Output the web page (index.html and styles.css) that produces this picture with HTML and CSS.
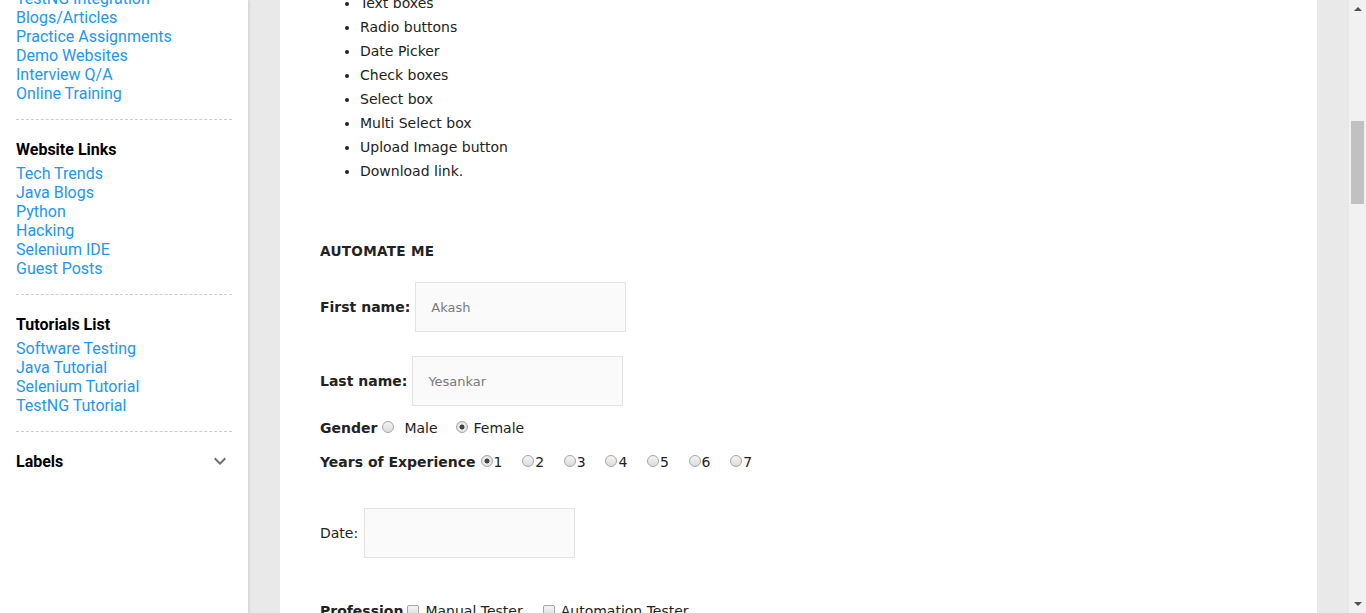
FILE: index.html
```html
<!DOCTYPE html>
<html lang="en">
<head>
<meta charset="utf-8">
<title>Automate Me</title>
<link rel="stylesheet" href="styles.css">
</head>
<body>
<div class="page">
  <aside class="sidebar">
    <div class="sidebar-inner">
      <ul class="links">
        <li><a href="#">TestNG Integration</a></li>
        <li><a href="#">Blogs/Articles</a></li>
        <li><a href="#">Practice Assignments</a></li>
        <li><a href="#">Demo Websites</a></li>
        <li><a href="#">Interview Q/A</a></li>
        <li><a href="#">Online Training</a></li>
      </ul>
      <div class="divider"></div>
      <h3 class="side-title">Website Links</h3>
      <ul class="links">
        <li><a href="#">Tech Trends</a></li>
        <li><a href="#">Java Blogs</a></li>
        <li><a href="#">Python</a></li>
        <li><a href="#">Hacking</a></li>
        <li><a href="#">Selenium IDE</a></li>
        <li><a href="#">Guest Posts</a></li>
      </ul>
      <div class="divider"></div>
      <h3 class="side-title">Tutorials List</h3>
      <ul class="links">
        <li><a href="#">Software Testing</a></li>
        <li><a href="#">Java Tutorial</a></li>
        <li><a href="#">Selenium Tutorial</a></li>
        <li><a href="#">TestNG Tutorial</a></li>
      </ul>
      <div class="divider"></div>
      <div class="labels-row">
        <h3 class="side-title flat">Labels</h3>
        <svg class="chev" width="24" height="24" viewBox="0 0 24 24"><path d="M16.59 8.59L12 13.17 7.41 8.59 6 10l6 6 6-6z" fill="#707070"/></svg>
      </div>
    </div>
  </aside>

  <main class="main">
    <div class="content">
      <div class="content-inner">
        <ul class="features">
          <li>Text boxes</li>
          <li>Radio buttons</li>
          <li>Date Picker</li>
          <li>Check boxes</li>
          <li>Select box</li>
          <li>Multi Select box</li>
          <li>Upload Image button</li>
          <li>Download link.</li>
        </ul>

        <h4 class="form-title">AUTOMATE ME</h4>

        <div class="field-row first">
          <label class="bold">First name:</label>
          <input class="text-in" type="text" placeholder="Akash">
        </div>
        <div class="field-row second">
          <label class="bold">Last name:</label>
          <input class="text-in" type="text" placeholder="Yesankar">
        </div>

        <div class="choice-row gender">
          <span class="bold">Gender</span>
          <input class="radio r-male" type="radio" name="g">
          <span class="opt-text male">Male</span>
          <input class="radio r-female" type="radio" name="g" checked>
          <span class="opt-text female">Female</span>
        </div>

        <div class="choice-row years">
          <span class="bold">Years of Experience</span>
          <span class="yopt"><input class="radio" type="radio" name="y" checked><span>1</span></span>
          <span class="yopt"><input class="radio" type="radio" name="y"><span>2</span></span>
          <span class="yopt"><input class="radio" type="radio" name="y"><span>3</span></span>
          <span class="yopt"><input class="radio" type="radio" name="y"><span>4</span></span>
          <span class="yopt"><input class="radio" type="radio" name="y"><span>5</span></span>
          <span class="yopt"><input class="radio" type="radio" name="y"><span>6</span></span>
          <span class="yopt"><input class="radio" type="radio" name="y"><span>7</span></span>
        </div>

        <div class="field-row date">
          <label>Date:</label>
          <input class="text-in" type="text">
        </div>

        <div class="choice-row profession">
          <span class="bold">Profession</span>
          <input class="check" type="checkbox">
          <span class="opt-text">Manual Tester</span>
          <input class="check c2" type="checkbox">
          <span class="opt-text">Automation Tester</span>
        </div>
      </div>
    </div>
  </main>

  <div class="scrollbar">
    <div class="arrow up"></div>
    <div class="track"><div class="thumb"></div></div>
    <div class="arrow down"></div>
  </div>
</div>
</body>
</html>
```

FILE: styles.css
```css
* { box-sizing: border-box; }
html, body {
  margin: 0;
  padding: 0;
  height: 100%;
  overflow: hidden;
}
body {
  background: #e9e9e9;
  font-family: "DejaVu Sans", Verdana, sans-serif;
}
.page {
  display: flex;
  align-items: stretch;
  height: 613px;
  overflow: hidden;
}

/* Sidebar */
.sidebar {
  width: 248px;
  flex: 0 0 248px;
  background: #fff;
  box-shadow: 1px 0 3px rgba(0,0,0,0.12);
  font-family: Roboto, "Liberation Sans", sans-serif;
  font-size: 16px;
  line-height: 19px;
  padding: 0 16px;
  position: relative;
  z-index: 1;
}
.sidebar-inner {
  margin-top: -11px;
}
.links {
  list-style: none;
  margin: 0;
  padding: 0;
}
.links a {
  color: #2196f3;
  text-decoration: none;
}
.divider {
  border-top: 1px dashed #cccccc;
  margin-top: 16px;
}
.side-title {
  margin: 20px 0 5px;
  font-size: 16px;
  font-weight: 700;
  line-height: 19px;
  color: #000;
}
.labels-row {
  display: flex;
  align-items: center;
  justify-content: space-between;
  margin-top: 17px;
}
.side-title.flat {
  margin: 0;
}
.chev { display: block; }

/* Main */
.main {
  flex: 1;
  display: flex;
  padding: 0 32px;
}
.content {
  flex: 1;
  background: #fff;
  padding: 0 40px;
  color: #222;
  font-size: 14px;
  overflow: hidden;
}
.content-inner {
  margin-top: -9px;
}
.features {
  margin: 0;
  padding-left: 40px;
  line-height: 24px;
}
.form-title {
  margin: 58px 0 0;
  font-size: 13.6px;
  line-height: 20px;
  font-weight: 700;
  letter-spacing: 0.3px;
}
.bold { font-weight: 700; }

.field-row {
  display: flex;
  align-items: center;
  gap: 5px;
  height: 50px;
}
.field-row.first { margin-top: 21px; }
.field-row.second { margin-top: 24px; }
.field-row.date { margin-top: 34px; gap: 6px; }
.text-in {
  width: 211px;
  height: 50px;
  border: 1px solid #e3e3e3;
  background: #fafafa;
  padding: 0 15px;
  font-family: "DejaVu Sans", Verdana, sans-serif;
  font-size: 13px;
  color: #333;
  outline: none;
}
.text-in::placeholder { color: #7a7a7a; }

.choice-row {
  display: flex;
  align-items: center;
  height: 24px;
}
.choice-row.gender { margin-top: 10px; }
.choice-row.years { margin-top: 10px; }
.choice-row.profession { margin-top: 41px; }

.radio {
  -webkit-appearance: none;
  appearance: none;
  width: 12px;
  height: 12px;
  margin: 0 0 0 5px;
  border: 1px solid #a6a6a6;
  border-radius: 50%;
  background: linear-gradient(#f4f4f4, #dcdcdc);
  position: relative;
  top: -1px;
  flex: 0 0 12px;
}
.radio:checked {
  background: radial-gradient(circle, #444 0, #444 2.2px, #ececec 2.8px, #dadada 100%);
}
.r-male { margin-right: 10px; }
.r-female { margin-left: 18px; margin-right: 6px; }

.yopt {
  display: inline-flex;
  align-items: center;
  margin-right: 14.7px;
}
.yopt .radio { margin-right: 1px; }

.check {
  -webkit-appearance: none;
  appearance: none;
  width: 12px;
  height: 12px;
  margin: 0 6px 0 4px;
  border: 1px solid #a6a6a6;
  border-radius: 2px;
  background: linear-gradient(#f4f4f4, #dcdcdc);
  flex: 0 0 12px;
}
.check.c2 { margin-left: 20px; }

/* Scrollbar */
.scrollbar {
  width: 17px;
  flex: 0 0 17px;
  background: #f1f1f1;
  display: flex;
  flex-direction: column;
  align-items: center;
}
.arrow {
  width: 0;
  height: 0;
  border-left: 4px solid transparent;
  border-right: 4px solid transparent;
}
.arrow.up {
  border-bottom: 4px solid #505050;
  margin-top: 7px;
}
.arrow.down {
  border-top: 4px solid #505050;
  margin-bottom: 7px;
}
.track {
  flex: 1;
  width: 100%;
  padding: 0 2px;
}
.thumb {
  background: #c1c1c1;
  height: 83px;
  margin-top: 110px;
}
```
